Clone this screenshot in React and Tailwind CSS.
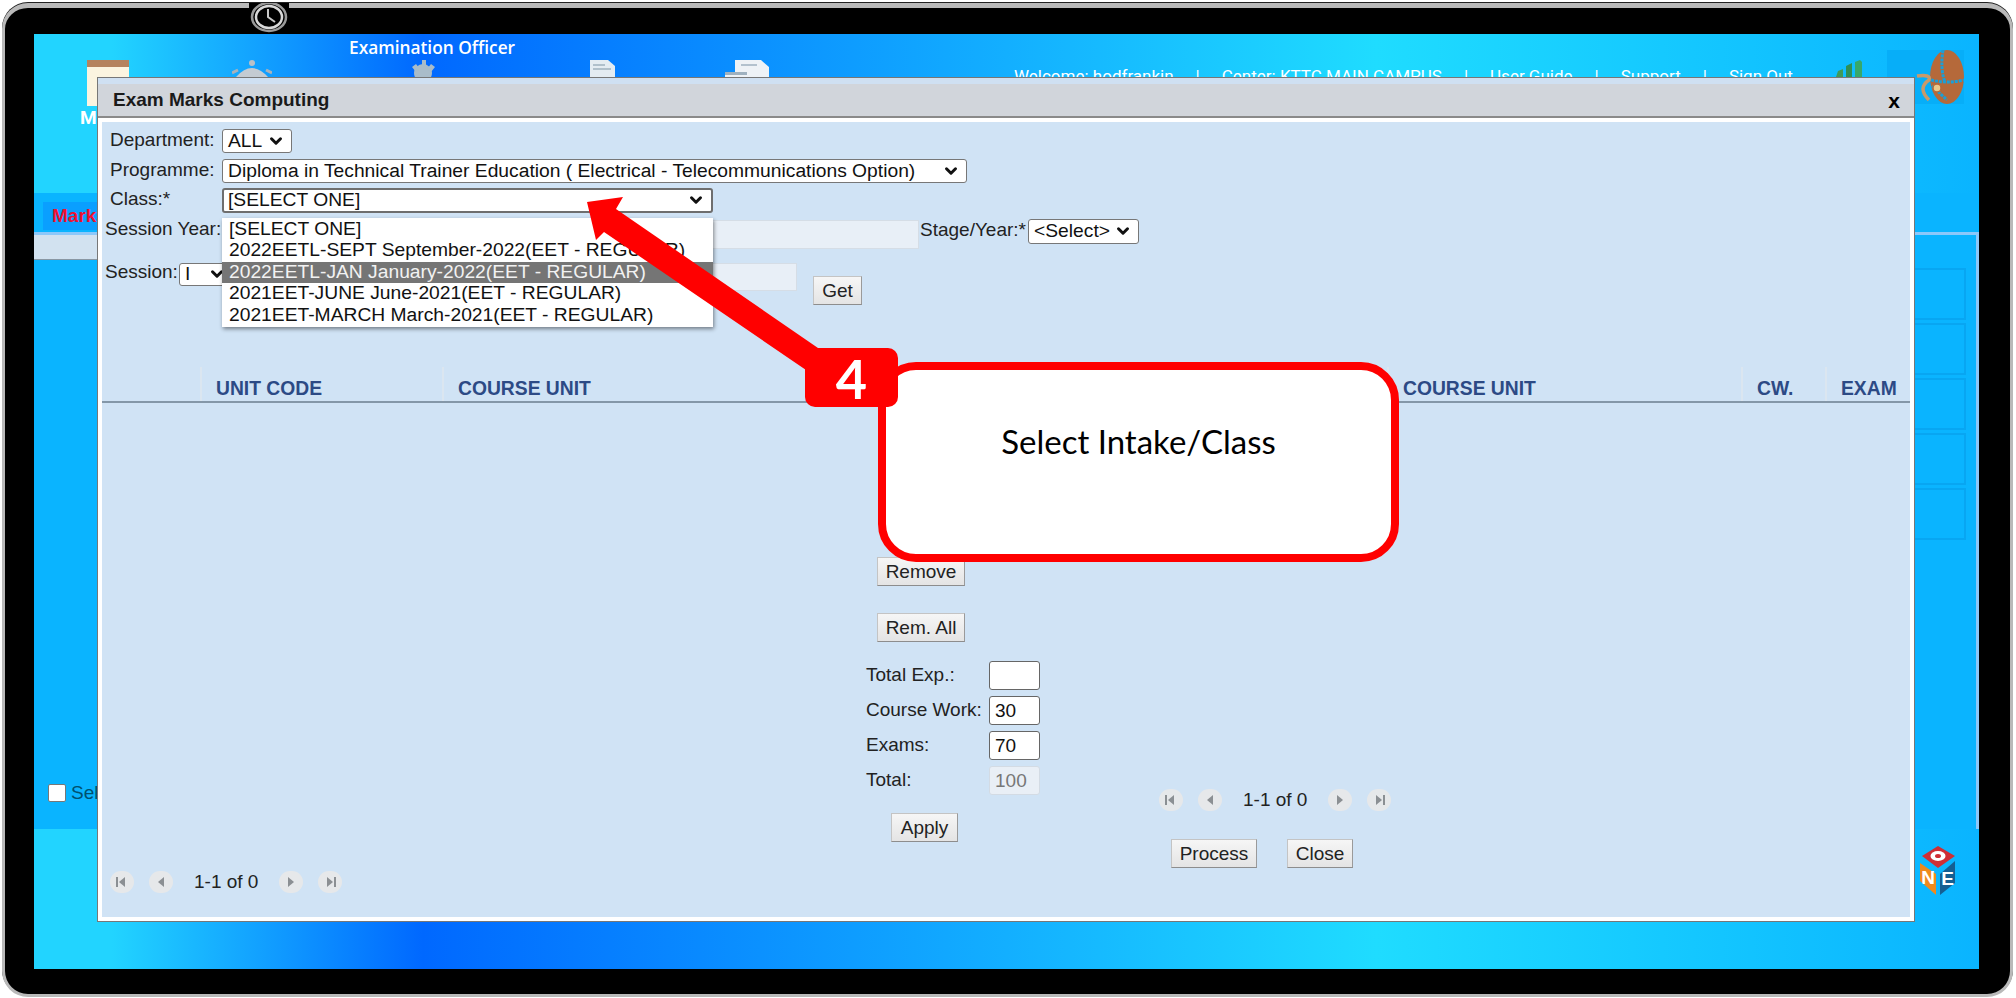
import { ChevronDown } from "lucide-react";

const classOptions = [
    "[SELECT ONE]",
    "2022EETL-SEPT September-2022(EET - REGULAR)",
    "2022EETL-JAN January-2022(EET - REGULAR)",
    "2021EET-JUNE June-2021(EET - REGULAR)",
    "2021EET-MARCH March-2021(EET - REGULAR)",
];

const topLinks = ["Welcome: hodfrankin", "Center: KTTC MAIN CAMPUS", "User Guide", "Support", "Sign Out"];

const gradient = "bg-[linear-gradient(90deg,#22d4ff_0%,#22d4ff_4%,#0068ff_20%,#1fdcff_69%,#0ab4ff_100%)]";

function Select({ value, className = "", focused = false }) {
    return (
        <button
            className={`shrink-0 flex items-center justify-between bg-white rounded-[3px] pr-[6px] pb-px text-[19.25px] leading-none text-[#111] whitespace-nowrap overflow-hidden ${focused ? "border-2 border-[#6e6e6e] pl-1" : "border border-[#777] pl-[5px]"} ${className}`}
        >
            <span>{value}</span>
            <ChevronDown size={18} strokeWidth={4} className="shrink-0 text-[#111]" />
        </button>
    );
}

function Btn({ children, className = "" }) {
    return (
        <button className={`h-[29px] bg-[linear-gradient(#f6f6f6,#e4e4e4)] border border-[#c4c4c4] border-b-[#8d8d8d] border-r-[#9a9a9a] text-[#222] leading-none ${className}`}>
            {children}
        </button>
    );
}

function PagerBtn({ dir, edge }) {
    const tri = dir === "left" ? "9,3 3,8 9,13" : "3,3 9,8 3,13";
    return (
        <span className="w-[24px] h-[22px] rounded-full bg-[#e6e8ea] flex items-center justify-center">
            <svg width="12" height="16" viewBox="0 0 12 16" fill="#8b8f93">
                <polygon points={tri} />
                {edge && <rect x={dir === "left" ? 0 : 10} y="3" width="2" height="10" />}
            </svg>
        </span>
    );
}

function Pager() {
    return (
        <div className="flex items-center gap-[15px]">
            <PagerBtn dir="left" edge />
            <PagerBtn dir="left" />
            <span className="mx-[6px] text-[#222]">1-1 of 0</span>
            <PagerBtn dir="right" />
            <PagerBtn dir="right" edge />
        </div>
    );
}

function MarkRow({ label, value, disabled }) {
    return (
        <div className="flex items-center h-[29px]">
            <span className="w-[123px] text-[#222] whitespace-nowrap">{label}</span>
            <input
                readOnly
                value={value}
                className={`w-[51px] h-full rounded-[3px] px-[5px] outline-none border ${disabled ? "bg-[#e9eff6] border-[#d3dbe4] text-[#777]" : "bg-white border-[#666] text-[#111]"}`}
            />
        </div>
    );
}

function HeaderCell({ children, className = "" }) {
    return (
        <div className={`h-full flex items-center pt-[10px] pl-[14px] border-l-2 border-[#dbe6f0] text-[#2c4a85] font-bold text-[19.3px] whitespace-nowrap ${className}`}>
            {children}
        </div>
    );
}

function NavIcons() {
    return (
        <div className="flex items-start h-[60px]">
            {/* book */}
            <svg width="42" height="46" viewBox="0 0 42 46" className="ml-[53px] shrink-0">
                <rect x="0" y="6" width="42" height="40" fill="#fbf4e0" />
                <rect x="0" y="0" width="42" height="7" fill="#b5835f" />
            </svg>
            {/* helm */}
            <svg width="40" height="17" viewBox="0 0 40 17" className="ml-[103px] shrink-0">
                <circle cx="20" cy="3" r="3" fill="#b8c0c8" />
                <path d="M4 17 Q20 -1 36 17 Z" fill="#c4cbd2" />
                <path d="M0 13 L6 10 M40 13 L34 10" stroke="#aab2ba" strokeWidth="3" />
            </svg>
            {/* gear */}
            <svg width="27" height="17" viewBox="0 0 27 17" className="ml-[138px] shrink-0">
                <circle cx="13" cy="13" r="9" fill="#a9bcc9" />
                <path d="M12 0h4v6h-4zM2 7l4-3 4 5-4 3zM25 7l-4-3-4 5 4 3z" fill="#a9bcc9" />
            </svg>
            {/* report */}
            <svg width="25" height="17" viewBox="0 0 25 17" className="ml-[153px] shrink-0">
                <path d="M0 0h18l7 6v11H0z" fill="#e4ecf2" />
                <path d="M3 5h12M3 9h18" stroke="#9fb1bf" strokeWidth="1.5" />
            </svg>
            {/* report 2 */}
            <svg width="48" height="17" viewBox="0 0 48 17" className="ml-[110px] shrink-0">
                <path d="M10 0h26l8 7v10H0v-5h10z" fill="#eef2f6" />
                <path d="M0 12h22v3H0z" fill="#9fb1bf" />
                <path d="M16 5h16" stroke="#9fb1bf" strokeWidth="1.5" />
            </svg>
            <div className="ml-[241px] mt-[8px] flex items-center gap-[22px] text-white text-[17px] leading-none font-['Roboto',sans-serif] whitespace-nowrap">
                {topLinks.map((link, i) => (
                    <span key={link} className="flex items-center gap-[22px]">
                        {i > 0 && <span>|</span>}
                        {link}
                    </span>
                ))}
            </div>
            {/* chart */}
            <svg width="28" height="17" viewBox="0 0 28 17" className="ml-[42px] shrink-0">
                <path d="M1 17 L3 11 L8 9 V17 Z" fill="#3f9a5a" />
                <path d="M11 17 V6 L17 3 V17 Z" fill="#2f8f55" />
                <path d="M20 17 V2 L25 0 L27 2 V17 Z" fill="#37a86a" />
            </svg>
            {/* college logo */}
            <svg width="77" height="54" viewBox="0 0 77 54" className="ml-[24px] -mt-[10px] shrink-0">
                <rect width="77" height="54" fill="#07aef8" />
                <ellipse cx="60" cy="27" rx="17" ry="27" fill="#b5693a" />
                <path d="M56 0 Q53 20 58 32 M44 30 Q60 34 77 30 M45 36 L60 50" stroke="#1a9fd8" strokeWidth="3" strokeDasharray="3 1" fill="none" />
                <path d="M30 26 Q44 24 42 30 Q30 38 42 50" stroke="#c99a6a" strokeWidth="3.5" fill="none" />
                <circle cx="50" cy="38" r="4" fill="#e8c98a" stroke="#b5693a" strokeWidth="1.5" />
            </svg>
        </div>
    );
}

function OneLogo() {
    return (
        <svg width="36" height="50" viewBox="0 0 36 50" className="shrink-0">
            <polygon points="18,0 35,10 18,22 2,10" fill="#cf2e35" />
            <ellipse cx="18" cy="10" rx="7.5" ry="5" fill="#fff" />
            <ellipse cx="18" cy="10" rx="3" ry="2" fill="#cf2e35" />
            <polygon points="0,17 16,28 16,49 0,35" fill="#ef8a1d" />
            <polygon points="35,15 20,28 20,49 35,37" fill="#155f93" />
            <text x="8" y="38" fontSize="19" fontWeight="700" fill="#fff" textAnchor="middle" fontFamily="Liberation Sans, sans-serif">N</text>
            <text x="27.5" y="39" fontSize="19" fontWeight="700" fill="#fff" textAnchor="middle" fontFamily="Liberation Sans, sans-serif">E</text>
        </svg>
    );
}

function Modal() {
    return (
        <div className="absolute left-[63px] top-[43px] w-[1818px] h-[845px] flex flex-col border border-[#777] bg-white text-[19px] font-['Liberation_Sans',Arial,sans-serif]">
            <div className="h-[6px] bg-[#cfe0f2]" />
            <div className="h-[34px] shrink-0 flex items-center justify-between pl-[15px] pr-[14px] bg-[#d1d5db] border-b-2 border-[#8a8a8a]">
                <span className="font-bold text-[19px] text-[#1a1a1a]">Exam Marks Computing</span>
                <span className="font-bold text-[21px] text-black leading-none">x</span>
            </div>
            <div className="flex-1 min-h-0 p-[4px]">
                <div className="relative h-full bg-[#d0e3f5] flex flex-col">
                    <div className="pl-2 pt-[7px] flex flex-col">
                        <div className="flex items-center h-[24px]">
                            <span className="w-[112px] -mt-[2px] text-[#222]">Department:</span>
                            <Select value="ALL" className="w-[70px] h-full" />
                        </div>
                        <div className="flex items-center h-[24px] mt-[6px]">
                            <span className="w-[112px] -mt-[2px] text-[#222]">Programme:</span>
                            <Select value="Diploma in Technical Trainer Education ( Electrical - Telecommunications Option)" className="w-[745px] h-full" />
                        </div>
                        <div className="flex items-center h-[25px] mt-[5px]">
                            <span className="w-[112px] -mt-[2px] text-[#222]">Class:*</span>
                            <Select value="[SELECT ONE]" focused className="w-[491px] h-full" />
                        </div>
                    </div>
                    <div className="flex items-start pl-[3px] mt-[6px] h-[44px]">
                        <span className="w-[117px] -mt-[1px] leading-[22px] text-[#222] whitespace-nowrap">Session Year:</span>
                        <input readOnly className="w-[697px] h-[29px] mt-px bg-[#e8eff7] border border-[#d5dde6]" />
                        <span className="ml-px w-[108px] leading-[22px] text-[#222] whitespace-nowrap">Stage/Year:*</span>
                        <Select value="<Select>" className="w-[111px] h-[25px]" />
                    </div>
                    <div className="flex items-start pl-[3px] h-[42px]">
                        <span className="w-[74px] -mt-[2px] leading-[22px] text-[#222]">Session:</span>
                        <Select value="I" className="w-[54px] h-[23px]" />
                        <input readOnly className="w-[564px] h-[28px] bg-[#e8eff7] border border-[#d5dde6]" />
                        <Btn className="ml-[16px] mt-[13px] w-[49px]">Get</Btn>
                    </div>
                    <div className="mt-[62px] h-[36px] shrink-0 flex border-b-2 border-[#8497a8]">
                        <div className="w-[98px]" />
                        <HeaderCell className="w-[242px]">UNIT CODE</HeaderCell>
                        <HeaderCell className="w-[945px]">COURSE UNIT</HeaderCell>
                        <HeaderCell className="w-[354px] border-l-0">COURSE UNIT</HeaderCell>
                        <HeaderCell className="w-[84px]">CW.</HeaderCell>
                        <HeaderCell className="flex-1">EXAM</HeaderCell>
                    </div>
                    <div className="flex-1 flex min-h-0">
                        <div className="w-[764px] flex flex-col justify-end pl-2 pb-[21px]">
                            <Pager />
                        </div>
                        <div className="w-[180px] pt-[154px] flex flex-col items-start">
                            <Btn className="ml-[11px] w-[88px]">Remove</Btn>
                            <Btn className="ml-[11px] w-[88px] mt-[27px]">Rem. All</Btn>
                            <div className="mt-[19px] flex flex-col gap-[6px]">
                                <MarkRow label="Total Exp.:" value="" />
                                <MarkRow label="Course Work:" value="30" />
                                <MarkRow label="Exams:" value="70" />
                                <MarkRow label="Total:" value="100" disabled />
                            </div>
                            <Btn className="ml-[25px] w-[67px] mt-[18px]">Apply</Btn>
                        </div>
                        <div className="flex-1 pt-[383px] pl-[113px]">
                            <Pager />
                            <div className="flex gap-[30px] mt-[24px] ml-[12px]">
                                <Btn className="w-[86px]">Process</Btn>
                                <Btn className="w-[66px]">Close</Btn>
                            </div>
                        </div>
                    </div>
                    {/* open class dropdown */}
                    <ul className="absolute left-[120px] top-[96px] w-[491px] h-[109px] bg-white shadow-[1px_2px_4px_rgba(0,0,0,0.45)] py-px text-[19.25px] text-[#111]">
                        {classOptions.map((opt, i) => (
                            <li
                                key={opt}
                                className={`h-[21.4px] leading-[20px] pl-[7px] whitespace-nowrap ${i === 2 ? "bg-[#757575] text-[#f2f2f2]" : ""}`}
                            >
                                {opt}
                            </li>
                        ))}
                    </ul>
                </div>
            </div>
        </div>
    );
}

function Screen() {
    return (
        <div className="relative w-[1945px] h-[935px] flex flex-col overflow-hidden">
            <div className={`h-[159px] shrink-0 ${gradient}`}>
                <div className="h-[26px] pl-[315px] pt-[2px] text-white text-[17.3px] font-semibold leading-[24px] font-['Open_Sans',sans-serif] whitespace-nowrap">
                    Examination Officer
                </div>
                <NavIcons />
                <div className="pl-[46px] -mt-[12px] text-white font-bold text-[19px] leading-none font-['Roboto',sans-serif]">M</div>
            </div>
            <div className="h-[636px] shrink-0 bg-[#0ab4ff] flex flex-col">
                <div className="h-[39px] shrink-0 pl-[9px] pt-[9px]">
                    <div className="h-[28px] w-[200px] bg-[#0a9fff] pl-[9px] text-[#f01030] font-bold text-[19px] leading-[28px] font-['Liberation_Sans',sans-serif]">Marks</div>
                </div>
                <div className="flex-1 min-h-0 flex border-t-[3px] border-r-[3px] border-[#8cc8fa]">
                    <div className="flex-1 flex flex-col">
                        <div className="h-[25px] w-[900px] bg-[#d2e2f0] border-b border-[#8a97a3]" />
                        <label className="mt-auto mb-[22px] ml-[14px] flex items-center gap-[5px] text-[#00506e] text-[19px] font-['Liberation_Sans',sans-serif]">
                            <input type="checkbox" className="appearance-none w-[18px] h-[18px] bg-white border border-[#777] rounded-[2px]" />
                            Select All
                        </label>
                    </div>
                    <div className="w-[400px] pt-[33px] pr-[10px] flex flex-col gap-[3px]">
                        {[1, 2, 3, 4, 5].map((n) => (
                            <div key={n} className="h-[52px] border-2 border-[#08a6f2]" />
                        ))}
                    </div>
                </div>
            </div>
            <div className={`flex-1 ${gradient} flex justify-end pr-[23px] pt-[17px]`}>
                <OneLogo />
            </div>
            <Modal />
        </div>
    );
}

export default function App() {
    return (
        <div className="relative w-[2016px] h-[998px] overflow-hidden bg-white">
            <div className="ml-[2px] mt-[3px] w-[2011px] h-[994px] rounded-[26px] bg-black border-t-[5px] border-x-[3px] border-b-[3px] border-[#b9b9b9] shadow-[0_-1px_0_#222] pt-[26px] pl-[29px]">
                <Screen />
            </div>

            {/* camera */}
            <svg width="40" height="31" viewBox="0 3 40 31" className="absolute left-[249px] top-[3px]">
                <rect y="3" width="40" height="31" fill="#000" />
                <ellipse cx="20" cy="17" rx="17" ry="14" fill="none" stroke="#9a9a9a" strokeWidth="2.5" />
                <ellipse cx="20" cy="17" rx="13" ry="11" fill="none" stroke="#d8d8d8" strokeWidth="2.5" />
                <path d="M19 9 V17 L26 22" fill="none" stroke="#c8c8c8" strokeWidth="2" />
            </svg>

            {/* callout arrow */}
            <svg width="2016" height="998" viewBox="0 0 2016 998" className="absolute inset-0 pointer-events-none">
                <polygon points="587,202 623,197 616,209 850,370 806,370 604,232 596,240" fill="#ff0000" />
            </svg>

            <div className="absolute left-[878px] top-[362px] w-[521px] h-[200px] bg-white border-[8px] border-[#ff0000] rounded-[38px] pt-[51px] text-center text-black text-[33px] leading-[40px] font-['Lato',sans-serif]">
                Select Intake/Class
            </div>
            <div className="absolute left-[805px] top-[348px] w-[93px] h-[59px] bg-[#ff0000] rounded-[10px] flex items-center justify-center pt-[2px] text-white font-bold text-[54px] leading-none font-['Lato',sans-serif]">
                4
            </div>
        </div>
    );
}
